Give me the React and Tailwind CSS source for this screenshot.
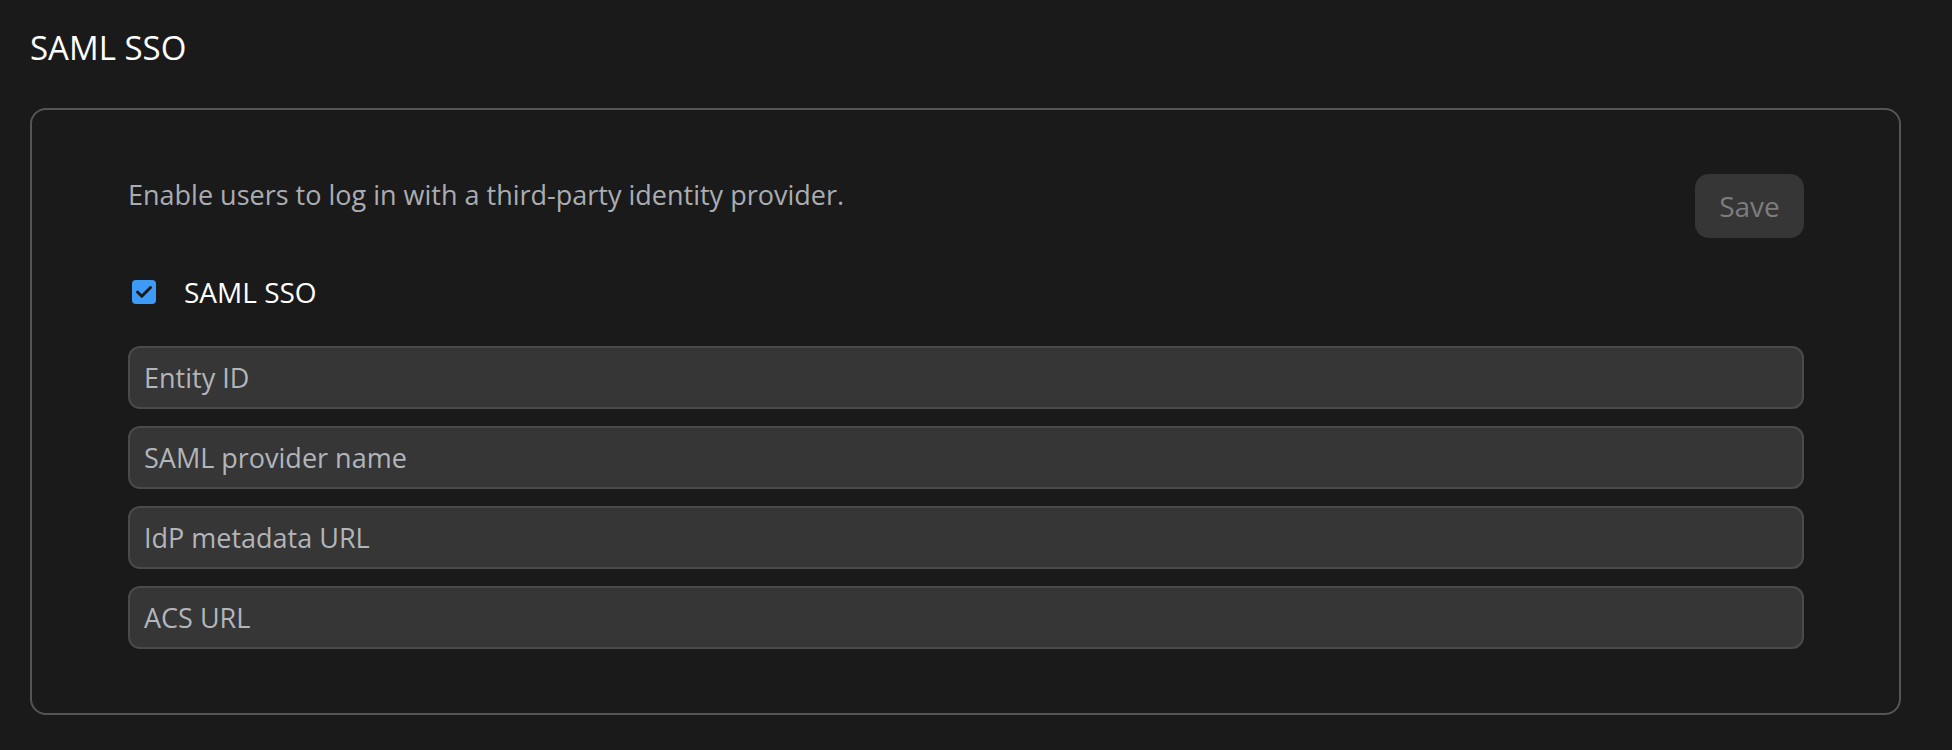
import React from "react";

const fields = ["Entity ID", "SAML provider name", "IdP metadata URL", "ACS URL"];

export default function App() {
  return (
    <div
      className="w-full min-h-[750px] bg-[#1a1a1a] px-[30px] pt-[28px] pb-[35px]"
      style={{ fontFamily: "'Open Sans', Lato, sans-serif" }}
    >
      <h1 className="text-[33px] leading-[40px] text-white font-normal">SAML SSO</h1>
      <div className="mt-[40px] w-[1871px] rounded-[16px] border-2 border-[#555555] pl-[96px] pr-[95px] pt-[64px] pb-[64px]">
        <div className="flex items-start justify-between">
          <p className="mt-[3px] text-[27px] leading-[36px] text-[#a9adb2]">
            Enable users to log in with a third-party identity provider.
          </p>
          <button className="h-[64px] w-[109px] rounded-[14px] bg-[#363636] text-[28px] leading-[36px] text-[#7d7d7d]">
            Save
          </button>
        </div>
        <label className="mt-[36px] flex items-center gap-[28px] pl-[4px]">
          <span className="flex h-[24px] w-[24px] items-center justify-center rounded-[4px] bg-[#3d9bf7]">
            <svg width="24" height="24" viewBox="0 0 24 24" fill="none">
              <path d="M5.5 12 L9.8 16.3 L18.5 7.5" stroke="#1a1a1a" strokeWidth="3" strokeLinecap="round" strokeLinejoin="round" />
            </svg>
          </span>
          <span className="text-[28px] leading-[36px] text-white">SAML SSO</span>
        </label>
        <div className="mt-[36px] flex flex-col gap-[17px]">
          {fields.map((f) => (
            <div
              key={f}
              className="flex h-[63px] items-center rounded-[12px] border-2 border-[#4a4a4a] bg-[#363636] px-[14px] text-[27px] leading-[36px] text-[#b2b5ba]"
            >
              {f}
            </div>
          ))}
        </div>
      </div>
    </div>
  );
}
